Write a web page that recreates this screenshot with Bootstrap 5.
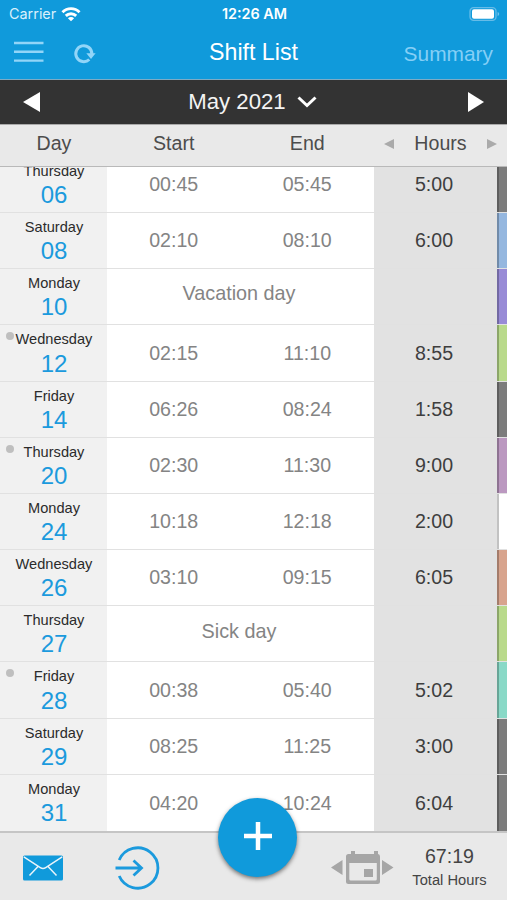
<!DOCTYPE html>
<html lang="en">
<head>
<meta charset="utf-8">
<meta name="viewport" content="width=device-width, initial-scale=1">
<title>Shift List</title>
<link href="https://cdn.jsdelivr.net/npm/bootstrap@5.3.0/dist/css/bootstrap.min.css" rel="stylesheet">
<style>
body{font-family:"Liberation Sans",Arial,sans-serif;font-size:19.6px;line-height:1;color:#444;background:#e9e9e9}
svg{display:block;flex:none}
.app{width:507px;height:900px}
.topbar{height:80px;background:#109adb;border-bottom:1px solid #7eabc4}
.status{height:28px;font-family:Inter,sans-serif;font-size:14.4px;padding:0 7px 0 9px}
.carrier{color:#d9f0fb}
.c3{display:grid;grid-template-columns:1fr auto 1fr;align-items:center}
.titles{height:51px;padding:0 14px}
.title-text{font-size:23.2px;padding-bottom:2px}
.summary{font-size:20.9px;color:#85cff6;padding-top:2px}
.month{height:44px;background:#333;color:#f4f4f4;font-size:22.2px;padding:0 23px}
.month-name{padding-right:3px;padding-top:1px}
.heads{height:43px;border-top:1px solid #aaa;border-bottom:1px solid #b9b9b9;color:#4c4c4c;padding-bottom:3px}
.shifts{height:664px;background:#fff}
.shift{height:56.18px;flex:none;border-bottom:1.5px solid #e1e1e1}
.shift:last-child{border-bottom:0}
.c-day{width:107px}.c-time{width:133.5px}.c-hours{width:123px}
.shift .c-day{background:#f1f1f1;padding:7px 0 0 1px}
.wd{font-size:14.6px;color:#2b2b2b}
.num{font-size:24px;color:#1b9add;margin-top:4.5px}
.c-time,.off-day{color:#848484}
.heads .c-time{color:inherit}
.shift .c-time,.shift .c-hours{padding-top:1px}
.off-day{width:267px;font-size:19.8px;padding:0 3px 5px 0}
.shift .c-hours{background:#e2e2e2;color:#3e3e3e;padding-right:3px}
.tag{width:10px;border-left:2px solid rgba(0,0,0,.24)}
.t-gray{background:#7c7c7c}.t-blue{background:#95b7df}.t-violet{background:#988bd6}.t-lime{background:#b9da8b}.t-mauve{background:#bb98c0}.t-white{background:#fff}.t-salmon{background:#d8a48d}.t-teal{background:#89d9c7}
.shift .dot{left:6px;top:7px;width:8px;height:8px;background:#bfbfbf}
.footer-bar{height:69px;border-top:2px solid #c5c5c5;background:#e9e9e9;padding-top:2px}
.fab{left:218px;top:-35px;width:79px;height:79px;background:#109adb;box-shadow:0 2px 4px rgba(0,0,0,.5)}
.total-label{font-size:14.7px;margin-top:6px}
</style>
<script src="https://cdn.jsdelivr.net/npm/bootstrap@5.3.0/dist/js/bootstrap.bundle.min.js" defer></script>
</head>
<body>
<div class="app d-flex flex-column overflow-hidden">
  <header class="topbar text-white">
    <div class="status c3">
      <div class="d-flex align-items-center">
        <span class="carrier">Carrier</span>
        <svg class="ms-1" width="22" height="18" viewBox="0 0 22 18" fill="none" stroke="#fff" stroke-width="2.9"><path d="M2.500 7.200a12 12 0 0 1 17 0M5.800 10.900a7.400 7.400 0 0 1 10.400 0"/><path d="M11 16.300l-3.100-3.100a4.400 4.400 0 0 1 6.200 0z" fill="#fff" stroke="none"/></svg>
      </div>
      <div class="fw-semibold">12:26 AM</div>
      <svg class="ms-auto" style="margin-top:-1px" width="31" height="14" viewBox="0 0 31 14"><rect x="1" y=".7" width="26" height="12.6" rx="3.6" fill="none" stroke="#66bce8" stroke-width="1.3"/><rect x="3" y="2.3" width="22" height="9.4" rx="2" fill="#fff"/><path d="M28.6 5v4q1.600-.6 1.600-2t-1.600-2" fill="#70c3ee"/></svg>
    </div>
    <div class="titles c3">
      <div class="d-flex align-items-center">
        <svg style="margin-top:-3px" width="30" height="24" viewBox="0 0 30 24" stroke="#92d5f8" stroke-width="2.400"><path d="M0 3h29.500M0 11.800h29.500M0 20.600h29.500"/></svg>
        <svg style="margin-left:28px" width="26" height="24" viewBox="0 0 26 24"><path d="M17.300 17.500A8 8 0 1 1 19.800 12" fill="none" stroke="#92d5f8" stroke-width="3"/><path d="M14.300 11.300h9.300l-4.600 5.700z" fill="#92d5f8"/></svg>
      </div>
      <div class="title-text">Shift List</div>
      <div class="summary text-end">Summary</div>
    </div>
  </header>
  <nav class="month d-flex align-items-center justify-content-between">
    <svg width="17" height="20" viewBox="0 0 17 20"><path d="M17 0v20L0 10z" fill="#fff"/></svg>
    <div class="month-name d-flex align-items-center">May 2021
      <svg style="margin-left:11px" width="20" height="14" viewBox="0 0 20 14"><path d="M1.500 2.500l8.500 8 8.500-8" fill="none" stroke="#fff" stroke-width="3"/></svg>
    </div>
    <svg style="margin-right:-1px" width="17" height="20" viewBox="0 0 17 20"><path d="M0 0v20l16-10z" fill="#fff"/></svg>
  </nav>
  <div class="heads d-flex align-items-center text-center">
    <div class="c-day" style="padding-left:1px">Day</div><div class="c-time">Start</div><div class="c-time">End</div>
    <div class="flex-fill d-flex justify-content-between align-items-center" style="padding:0 10px 0 10px">
      <svg width="10" height="10" viewBox="0 0 10 10"><path d="M10 0v10L0 5z" fill="#aaa"/></svg><span>Hours</span><svg width="10" height="10" viewBox="0 0 10 10"><path d="M0 0v10l10-5z" fill="#aaa"/></svg>
    </div>
  </div>
  <main class="shifts d-flex flex-column justify-content-end overflow-hidden" id="shifts"></main>
  <footer class="footer-bar position-relative d-flex align-items-center">
    <svg style="margin-left:23px" width="40" height="26" viewBox="0 0 40 26"><rect y=".5" width="40" height="25" rx="1.5" fill="#109adb"/><path d="M.8 1.800L17.300 12.600q2.700 1.700 5.400 0L39.200 1.800M15 11.500L6.500 20.500M25 11.500l8.500 9" fill="none" stroke="#e9f4fa" stroke-width="1.500"/></svg>
    <svg style="margin-left:52px" width="46" height="46" viewBox="0 0 46 46" fill="none" stroke="#1b9add" stroke-width="2.800"><path d="M4.200 15A20.200 20.200 0 1 1 4.200 31M.5 23h26M18.500 15.500l8 7.500-8 7.500"/></svg>
    <div class="fab position-absolute rounded-circle d-flex align-items-center justify-content-center">
      <svg style="margin-top:-3px" width="28" height="28" viewBox="0 0 28 28"><path d="M14 0v28M0 14h28" stroke="#fff" stroke-width="4.500"/></svg>
    </div>
    <svg class="ms-auto" width="63" height="36" viewBox="0 0 63 36" fill="#a6a6a6"><path d="M11.500 10v15L0 17.500zM51 10v15l11.500-7.500z"/><path fill-rule="evenodd" d="M20 1h4v3h19V1h4v3q2 0 2 2.500v25q0 2.500-2.500 2.500h-29Q15 34 15 31.500v-25Q15 4 17.500 4H20zM18.300 13v16q0 1.500 1.500 1.500h24.500q1.500 0 1.500-1.500V13z"/><rect x="33" y="19" width="9" height="8"/></svg>
    <div class="text-center" style="width:113px;padding-right:2px"><div>67:19</div><div class="total-label">Total Hours</div></div>
  </footer>
</div>
<script>
// weekday, day, start (or label for a day off), end, hours, tag colour, has note
const shifts=[
["Thursday","06","00:45","05:45","5:00","gray"],
["Saturday","08","02:10","08:10","6:00","blue"],
["Monday","10","Vacation day","","","violet"],
["Wednesday","12","02:15","11:10","8:55","lime",1],
["Friday","14","06:26","08:24","1:58","gray"],
["Thursday","20","02:30","11:30","9:00","mauve",1],
["Monday","24","10:18","12:18","2:00","white"],
["Wednesday","26","03:10","09:15","6:05","salmon"],
["Thursday","27","Sick day","","","lime"],
["Friday","28","00:38","05:40","5:02","teal",1],
["Saturday","29","08:25","11:25","3:00","gray"],
["Monday","31","04:20","10:24","6:04","gray"]];
const cell="d-flex align-items-center justify-content-center";
document.getElementById("shifts").innerHTML=shifts.map(([w,d,s,e,h,c,n])=>`<div class="shift d-flex text-center">
<div class="c-day position-relative">${n?'<span class="dot position-absolute rounded-circle"></span>':''}<div class="wd">${w}</div><div class="num">${d}</div></div>
${e?`<div class="c-time ${cell}">${s}</div><div class="c-time ${cell}">${e}</div>`:`<div class="off-day ${cell}">${s}</div>`}
<div class="c-hours ${cell}">${h}</div><div class="tag t-${c}"></div></div>`).join("");
</script>
</body>
</html>
